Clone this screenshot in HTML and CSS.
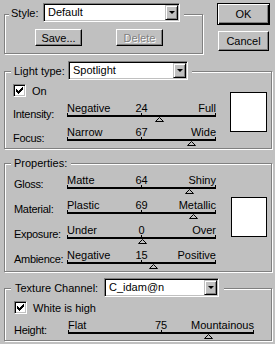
FILE: index.html
```html
<!DOCTYPE html>
<html lang="en">
<head>
  <meta charset="UTF-8" />
  <title>Lighting Effects</title>
  <link rel="stylesheet" href="styles.css">
</head>
<body>
  <div class="dialog">

    <div class="top">
      <div class="group style-group">
        <div class="head">
          <span class="head-label">Style:</span>
          <div class="combo"><span class="value">Default</span><span class="arrow"></span></div>
        </div>
        <div class="btn-row">
          <button class="btn small">Save...</button>
          <button class="btn small" disabled>Delete</button>
        </div>
      </div>
      <div class="actions">
        <button class="btn default">OK</button>
        <button class="btn">Cancel</button>
      </div>
    </div>

    <div class="group light">
      <div class="head">
        <span class="head-label">Light type:</span>
        <div class="combo"><span class="value">Spotlight</span><span class="arrow"></span></div>
      </div>
      <div class="body">
        <div class="controls">
          <label class="checkrow">
            <span class="check"><svg width="7" height="7" viewBox="0 0 7 7"><path d="M0 2h1v1h1v1h1v-1h1v-1h1v-1h1v-1h1v3h-1v1h-1v1h-1v1h-1v1h-1v-1h-1v-1h-1z"/></svg></span>
            On
          </label>
          <div class="row">
            <span class="label">Intensity:</span>
            <div class="slider">
              <div class="scale"><span>Negative</span><span>24</span><span>Full</span></div>
              <div class="track"></div>
              <svg class="thumb" style="left: 62%" width="9" height="5" viewBox="0 0 9 5"><path d="M4.5 0.5L8.5 4.5H0.5Z"/></svg>
            </div>
          </div>
          <div class="row">
            <span class="label">Focus:</span>
            <div class="slider">
              <div class="scale"><span>Narrow</span><span>67</span><span>Wide</span></div>
              <div class="track"></div>
              <svg class="thumb" style="left: 83.5%" width="9" height="5" viewBox="0 0 9 5"><path d="M4.5 0.5L8.5 4.5H0.5Z"/></svg>
            </div>
          </div>
        </div>
        <div class="swatch"></div>
      </div>
    </div>

    <div class="group props">
      <div class="head">
        <span>Properties:</span>
      </div>
      <div class="body">
        <div class="controls">
          <div class="row">
            <span class="label">Gloss:</span>
            <div class="slider">
              <div class="scale"><span>Matte</span><span>64</span><span>Shiny</span></div>
              <div class="track"></div>
              <svg class="thumb" style="left: 82%" width="9" height="5" viewBox="0 0 9 5"><path d="M4.5 0.5L8.5 4.5H0.5Z"/></svg>
            </div>
          </div>
          <div class="row">
            <span class="label">Material:</span>
            <div class="slider">
              <div class="scale"><span>Plastic</span><span>69</span><span>Metallic</span></div>
              <div class="track"></div>
              <svg class="thumb" style="left: 84.5%" width="9" height="5" viewBox="0 0 9 5"><path d="M4.5 0.5L8.5 4.5H0.5Z"/></svg>
            </div>
          </div>
          <div class="row">
            <span class="label">Exposure:</span>
            <div class="slider">
              <div class="scale"><span>Under</span><span>0</span><span>Over</span></div>
              <div class="track"></div>
              <svg class="thumb" style="left: 50%" width="9" height="5" viewBox="0 0 9 5"><path d="M4.5 0.5L8.5 4.5H0.5Z"/></svg>
            </div>
          </div>
          <div class="row">
            <span class="label">Ambience:</span>
            <div class="slider">
              <div class="scale"><span>Negative</span><span>15</span><span>Positive</span></div>
              <div class="track"></div>
              <svg class="thumb" style="left: 57.5%" width="9" height="5" viewBox="0 0 9 5"><path d="M4.5 0.5L8.5 4.5H0.5Z"/></svg>
            </div>
          </div>
        </div>
        <div class="swatch"></div>
      </div>
    </div>

    <div class="group texture">
      <div class="head">
        <span class="head-label">Texture Channel:</span>
        <div class="combo"><span class="value">C_idam@n</span><span class="arrow"></span></div>
      </div>
      <div class="controls">
        <label class="checkrow">
          <span class="check"><svg width="7" height="7" viewBox="0 0 7 7"><path d="M0 2h1v1h1v1h1v-1h1v-1h1v-1h1v-1h1v3h-1v1h-1v1h-1v1h-1v1h-1v-1h-1v-1h-1z"/></svg></span>
          White is high
        </label>
        <div class="row">
          <span class="label">Height:</span>
          <div class="slider wide">
            <div class="scale"><span>Flat</span><span>75</span><span>Mountainous</span></div>
            <div class="track"></div>
            <svg class="thumb" style="left: 75%" width="9" height="5" viewBox="0 0 9 5"><path d="M4.5 0.5L8.5 4.5H0.5Z"/></svg>
          </div>
        </div>
      </div>
    </div>

  </div>
</body>
</html>
```

FILE: styles.css
```css
* {
  box-sizing: border-box;
}

body {
  margin: 0;
  background: #c0c0c0;
  font-family: "Liberation Sans", Arial, sans-serif;
  font-size: 11px;
  color: #000;
}

.dialog {
  width: 275px;
  height: 344px;
  padding-left: 4px;
  overflow: hidden;
}

/* etched group frame */
.group {
  border: 1px solid #808080;
  box-shadow: 1px 1px 0 #fff, inset 1px 1px 0 #fff;
}

.head {
  display: flex;
  align-items: center;
  width: max-content;
  height: 19px;
  margin: -11px 0 0 6px;
  padding: 0 4px 0 3px;
  background: #c0c0c0;
}

.head-label {
  flex: none;
}

/* combo box */
.combo {
  display: flex;
  height: 19px;
  padding: 1px;
  background: #fff;
  border: 1px solid;
  border-color: #808080 #fff #fff #808080;
  box-shadow: inset 1px 1px 0 #000, inset -1px -1px 0 #c0c0c0;
}

.combo .value {
  flex: 1;
  padding-left: 3px;
  line-height: 15px;
  white-space: nowrap;
}

.combo .arrow {
  display: flex;
  align-items: center;
  justify-content: center;
  width: 13px;
  background: #c0c0c0;
  border: 1px solid;
  border-color: #c0c0c0 #000 #000 #c0c0c0;
  box-shadow: inset 1px 1px 0 #fff, inset -1px -1px 0 #808080;
}

.combo .arrow::before {
  content: "";
  border-left: 3px solid transparent;
  border-right: 3px solid transparent;
  border-top: 3px solid #000;
}

/* buttons */
.btn {
  font: inherit;
  color: #000;
  background: #c0c0c0;
  border: 1px solid;
  border-color: #fff #000 #000 #fff;
  box-shadow: inset -1px -1px 0 #808080;
  padding: 0;
  width: 51px;
  height: 20px;
}

.btn:disabled {
  color: #808080;
  text-shadow: 1px 1px 0 #fff;
}

.btn.default {
  width: 53px;
  height: 22px;
  border-color: #000;
  box-shadow: inset 1px 1px 0 #fff, inset -1px -1px 0 #000, inset -2px -2px 0 #808080;
}

.btn.small {
  width: 47px;
  height: 17px;
}

/* top area */
.top {
  display: flex;
  align-items: flex-start;
}

.style-group {
  width: 199px;
  height: 40px;
  margin-top: 14px;
}

.style-group .head {
  margin-left: 4px;
  margin-top: -12px;
  padding-left: 2px;
}

.style-group .head-label {
  width: 32px;
}

.style-group .combo {
  width: 137px;
}

.btn-row {
  display: flex;
  gap: 34px;
  margin: 7px 0 0 30px;
}

.actions {
  display: flex;
  flex-direction: column;
  align-items: center;
  gap: 6px;
  margin: 3px 0 0 14px;
}

/* shared group body */
.body {
  display: flex;
  align-items: flex-start;
}

.checkrow {
  display: flex;
  align-items: center;
  gap: 6px;
  height: 13px;
}

.check {
  display: flex;
  align-items: center;
  justify-content: center;
  width: 13px;
  height: 13px;
  background: #fff;
  border: 1px solid;
  border-color: #808080 #fff #fff #808080;
  box-shadow: inset 1px 1px 0 #000, inset -1px -1px 0 #c0c0c0;
}

.check svg {
  fill: #000;
}

.row {
  display: flex;
  align-items: flex-start;
  margin-top: 6px;
}

.label {
  width: 54px;
  line-height: 12px;
  letter-spacing: -0.3px;
  white-space: nowrap;
}

/* slider */
.slider {
  position: relative;
  width: 149px;
  height: 19px;
}

.slider.wide {
  width: 186px;
}

.scale {
  display: grid;
  grid-template-columns: 1fr auto 1fr;
  height: 12px;
  line-height: 11px;
  white-space: nowrap;
}

.scale span:last-child {
  text-align: right;
}

.track {
  position: relative;
  height: 2px;
  background: #000;
}

.track::before {
  content: "";
  position: absolute;
  left: 0;
  right: 0;
  top: -2px;
  height: 2px;
  background:
    linear-gradient(#000, #000) left / 1px 100% no-repeat,
    linear-gradient(#000, #000) center / 1px 100% no-repeat,
    linear-gradient(#000, #000) right / 1px 100% no-repeat;
}

.thumb {
  position: absolute;
  top: 14px;
  margin-left: -4px;
  fill: #c0c0c0;
  stroke: #000;
}

.swatch {
  flex: none;
  background: #fff;
  border: 1px solid #000;
}

/* light group */
.light {
  width: 268px;
  height: 78px;
  margin-top: 17px;
}

.light .head-label {
  width: 54px;
}

.light .combo {
  width: 120px;
}

.light .controls {
  padding-left: 8px;
}

.light .checkrow {
  margin-top: 4px;
}

.light .row:nth-of-type(2) {
  margin-top: 5px;
}

.light .label {
  margin-top: 5px;
}

.light .swatch {
  width: 37px;
  height: 40px;
  margin: 12px 0 0 14px;
}

/* properties group */
.props {
  width: 268px;
  height: 109px;
  margin-top: 14px;
}

.props .controls {
  padding-left: 9px;
}

.props .row:first-child {
  margin-top: 3px;
}

.props .label {
  width: 53px;
  margin-top: 3px;
}

.props .swatch {
  width: 36px;
  height: 40px;
  margin: 25px 0 0 15px;
}

/* texture group */
.texture {
  width: 268px;
  height: 53px;
  margin-top: 16px;
}

.texture .head {
  padding: 0 5px 0 4px;
}

.texture .head-label {
  width: 89px;
}

.texture .combo {
  width: 115px;
}

.texture .controls {
  padding-left: 9px;
}

.texture .checkrow {
  margin-top: 4px;
}

.texture .label {
  margin-top: 4px;
}
```
